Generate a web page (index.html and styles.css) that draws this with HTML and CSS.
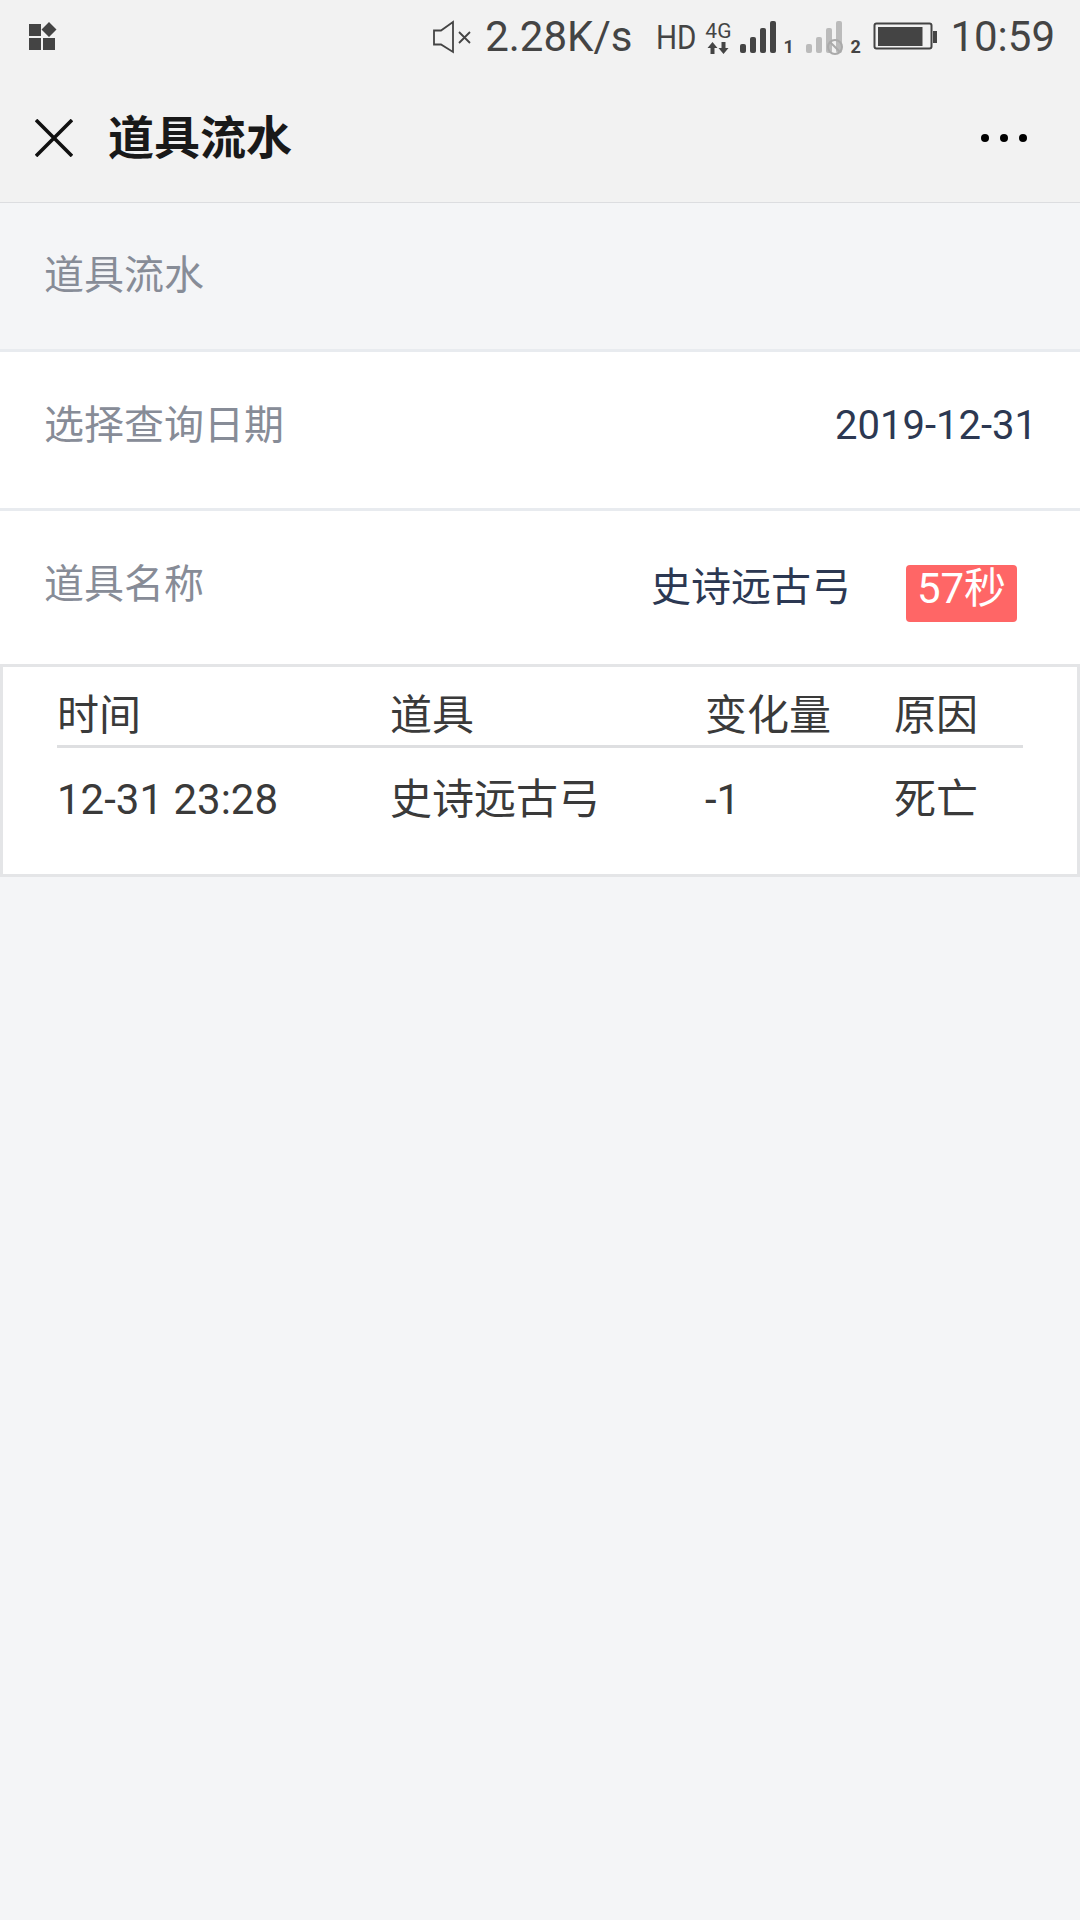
FILE: index.html
```html
<!DOCTYPE html>
<html lang="zh">
<head>
<meta charset="utf-8">
<title>道具流水</title>
<link rel="stylesheet" href="styles.css">
</head>
<body>
<div class="topbar">
  <div class="status">
    <svg class="ic-apps" width="30" height="30" viewBox="0 0 30 30"><path fill="#444" d="M2 3h12v12H2zM2 17h12v12H2zM16 17h12v12H16zM22 1l7.500 7.500L22 16l-7.500-7.500z"/></svg>
    <div class="status-right">
      <svg class="ic-mute" width="40" height="36" viewBox="0 0 40 36"><path fill="none" stroke="#444" stroke-width="1.800" d="M2 11.500h7L21 3v30L9 25.500H2z"/><path fill="none" stroke="#444" stroke-width="1.800" d="M27 13l11 11M38 13L27 24"/></svg>
      <span class="speed">2.28K/s</span>
      <span class="hd">HD</span>
      <span class="net"><span class="net-4g">4G</span><svg width="22" height="12" viewBox="0 0 22 12"><path fill="#444" d="M5.500 0l5 6H7.500v6h-4V6H.5zM16.500 12l5-6h-3V0h-4v6h-3z"/></svg></span>
      <svg class="ic-sig" width="38" height="34" viewBox="0 0 38 34"><g fill="#444"><rect x="0" y="25" width="6" height="9" rx="2"/><rect x="10" y="18" width="6" height="16" rx="2"/><rect x="20" y="9" width="6" height="25" rx="2"/><rect x="30" y="2" width="6" height="32" rx="2"/></g></svg>
      <span class="simno">1</span>
      <svg class="ic-sig ic-sig2" width="40" height="38" viewBox="0 0 40 38"><g fill="#bbb"><rect x="0" y="25" width="6" height="9" rx="2"/><rect x="10" y="18" width="6" height="16" rx="2"/><rect x="20" y="9" width="6" height="25" rx="2"/><rect x="30" y="2" width="6" height="32" rx="2"/></g><circle cx="29" cy="28" r="7" fill="none" stroke="#aaa" stroke-width="2"/><path stroke="#aaa" stroke-width="2" d="M24 23l10 10"/></svg>
      <span class="simno simno2">2</span>
      <svg class="ic-batt" width="64" height="30" viewBox="0 0 64 30"><rect x="1.500" y="2.500" width="57" height="25" rx="2" fill="none" stroke="#444" stroke-width="2"/><rect x="5" y="6" width="44.500" height="19" fill="#444"/><rect x="60" y="10" width="4" height="12" fill="#444"/></svg>
      <span class="clock">10:59</span>
    </div>
  </div>
  <div class="nav">
    <svg class="ic-close" width="38" height="38" viewBox="0 0 38 38"><path stroke="#111" stroke-width="3.600" d="M1 1l36 36M37 1L1 37"/></svg>
    <h1 class="title">道具流水</h1>
    <div class="more"><i></i><i></i><i></i></div>
  </div>
</div>
<main>
  <div class="section-head">道具流水</div>
  <div class="row row-date"><span class="label">选择查询日期</span><span class="value">2019-12-31</span></div>
  <div class="row row-item">
    <span class="label">道具名称</span>
    <span class="item-right"><span class="value">史诗远古弓</span><span class="badge">57秒</span></span>
  </div>
  <div class="table-box">
    <table class="log">
      <thead><tr><th class="c1">时间</th><th class="c2">道具</th><th class="c3">变化量</th><th class="c4">原因</th></tr></thead>
      <tbody><tr><td>12-31 23:28</td><td>史诗远古弓</td><td>-1</td><td>死亡</td></tr></tbody>
    </table>
  </div>
</main>
</body>
</html>
```
FILE: styles.css
```css
* { box-sizing: border-box; }
html, body { margin: 0; padding: 0; }
body {
  width: 1080px;
  height: 1920px;
  background: #f4f5f7;
  font-family: Roboto, "Noto Sans CJK SC", sans-serif;
  overflow: hidden;
}
.topbar {
  height: 203px;
  background: #f2f2f2;
  border-bottom: 1px solid #dcdde0;
}
.status {
  height: 74px;
  display: flex;
  align-items: center;
  justify-content: space-between;
  padding: 0 25px 0 27px;
  color: #444;
}
.ic-apps { margin-top: -3px; }
.status-right { display: flex; align-items: center; }
.speed { font-size: 42px; margin-left: 13px; line-height: 48px; }
.hd { font-size: 34px; margin-left: 24px; transform: scaleX(.87); transform-origin: left center; width: 41px; }
.net { display: flex; flex-direction: column; align-items: center; margin-left: 8px; width: 26px; margin-top: 2px; }
.net-4g { font-size: 21px; line-height: 19px; }
.net svg { display: block; margin-top: 1px; }
.ic-sig { margin-left: 9px; margin-top: -2px; }
.ic-sig2 { margin-left: 9px; margin-top: 2px; }
.simno { font-size: 18px; font-weight: 700; width: 14px; margin: 18px 0 0 5px; }
.simno2 { margin-left: 4px; }
.ic-batt { margin-left: 9px; margin-top: -2px; }
.clock { font-size: 42px; margin-left: 13px; line-height: 48px; }
.nav {
  height: 128px;
  display: flex;
  align-items: center;
  padding: 0 53px 0 35px;
}
.ic-close { flex: none; margin-top: -1px; }
.title {
  margin: -8px 0 0 35px;
  font-size: 46px;
  font-weight: 700;
  color: #191919;
  flex: 1;
}
.more { display: flex; gap: 11px; }
.more i { display: block; width: 8px; height: 8px; border-radius: 50%; background: #000; }
.section-head {
  height: 149px;
  padding: 47px 44px 0 44px;
  font-size: 40px;
  line-height: 52px;
  color: #878c97;
  border-bottom: 3px solid #e8ebef;
}
.row {
  background: #fff;
  display: flex;
  justify-content: space-between;
  padding: 0 44px;
  font-size: 40px;
  line-height: 52px;
}
.row-date {
  height: 159px;
  align-items: center;
  border-bottom: 3px solid #e8ebef;
  padding-bottom: 9px;
}
.row-date .value { margin-right: -1px; }
.row-item { height: 153px; padding-top: 48px; padding-right: 63px; }
.label { color: #878c97; }
.value { color: #2c3852; }
.item-right { display: flex; align-items: flex-start; }
.item-right .value { margin-top: 3px; }
.badge {
  margin-left: 55px;
  margin-top: 6px;
  width: 111px;
  height: 57px;
  background: #ff6666;
  color: #fff;
  border-radius: 4px;
  text-align: center;
  font-size: 42px;
  line-height: 48px;
}
.table-box {
  height: 213px;
  background: #fff;
  border: 3px solid #e4e5e7;
  padding: 0 54px;
}
.log {
  width: 966px;
  border-collapse: collapse;
  table-layout: fixed;
  font-size: 42px;
  color: #3a3a3a;
}
.log th { font-weight: 400; text-align: left; height: 79px; padding: 20px 0 0; line-height: 50px; border-bottom: 3px solid #dedfe1; }
.log td { height: 106px; padding: 0; line-height: 50px; }
.c1 { width: 333px; }
.c2 { width: 315px; }
.c3 { width: 189px; }
```
